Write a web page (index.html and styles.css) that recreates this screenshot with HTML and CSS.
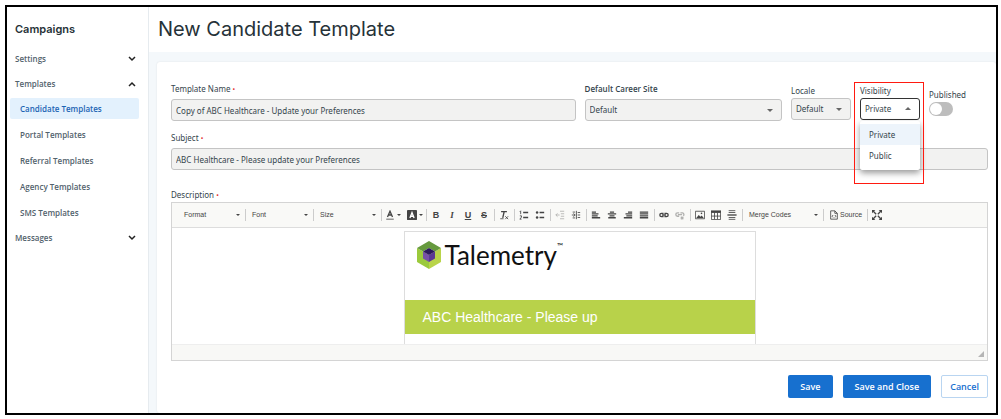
FILE: index.html
```html
<!DOCTYPE html>
<html lang="en">
<head>
    <meta charset="UTF-8">
    <meta name="viewport" content="width=device-width, initial-scale=1.0">
    <title>New Candidate Template</title>
    <link rel="stylesheet" href="styles.css">
</head>
<body>
    <div class="app">
        <nav class="sidebar">
            <h2>Campaigns</h2>
            <button class="nav-group" type="button">Settings
                <svg width="8" height="6" viewBox="0 0 8 6"><path d="M1 1l3 3 3-3"/></svg>
            </button>
            <button class="nav-group" type="button">Templates
                <svg width="8" height="6" viewBox="0 0 8 6"><path d="M1 5l3-3 3 3"/></svg>
            </button>
            <ul class="nav-list">
                <li><a href="#" class="active">Candidate Templates</a></li>
                <li><a href="#">Portal Templates</a></li>
                <li><a href="#">Referral Templates</a></li>
                <li><a href="#">Agency Templates</a></li>
                <li><a href="#">SMS Templates</a></li>
            </ul>
            <button class="nav-group" type="button">Messages
                <svg width="8" height="6" viewBox="0 0 8 6"><path d="M1 1l3 3 3-3"/></svg>
            </button>
        </nav>

        <main class="main">
            <header class="page-header">
                <h1>New Candidate Template</h1>
            </header>

            <form class="card">
                <div class="field-row">
                    <div class="field">
                        <label for="template-name">Template Name <span class="required">•</span></label>
                        <input type="text" id="template-name" name="template-name" value="Copy of ABC Healthcare - Update your Preferences">
                    </div>
                    <div class="field">
                        <label for="career-site" class="strong">Default Career Site</label>
                        <div class="select">
                            <select id="career-site" name="career-site"><option>Default</option></select>
                        </div>
                    </div>
                    <div class="field compact">
                        <label for="locale">Locale</label>
                        <div class="select">
                            <select id="locale" name="locale"><option>Default</option></select>
                        </div>
                    </div>
                    <div class="field compact visibility">
                        <label for="visibility">Visibility</label>
                        <div class="select open">
                            <select id="visibility" name="visibility"><option>Private</option><option>Public</option></select>
                        </div>
                        <ul class="menu" role="listbox" aria-label="Visibility">
                            <li role="option" class="selected" aria-selected="true">Private</li>
                            <li role="option" aria-selected="false">Public</li>
                        </ul>
                        <div class="highlight"></div>
                    </div>
                    <div class="field published">
                        <label for="published">Published</label>
                        <input type="checkbox" id="published" name="published" class="toggle">
                    </div>
                </div>

                <div class="field subject">
                    <label for="subject">Subject <span class="required">•</span></label>
                    <input type="text" id="subject" name="subject" value="ABC Healthcare - Please update your Preferences">
                </div>

                <div class="description">
                    <span class="label" id="description-label">Description <span class="required">•</span></span>
                    <div class="editor">
                        <div class="toolbar">
                            <button type="button" class="combo">Format</button>
                            <button type="button" class="combo">Font</button>
                            <button type="button" class="combo">Size</button>
                            <div class="group colors">
                                <button type="button" class="tool-drop" aria-label="Text color">
                                    <svg class="icon" viewBox="0 0 12 12"><path class="line" d="M3 8.500L6 1.500l3 7M4.200 6h3.600"/><path class="thin" d="M1.500 11h9"/></svg>
                                </button>
                                <button type="button" class="tool-drop" aria-label="Background color">
                                    <svg class="icon" viewBox="0 0 12 12"><rect x="0" y="0" width="12" height="12" rx="1"/><path class="line white" d="M3.500 9.500L6 3l2.500 6.500M4.500 7.500h3"/></svg>
                                </button>
                            </div>
                            <div class="group">
                                <button type="button" class="tool bold">B</button>
                                <button type="button" class="tool italic">I</button>
                                <button type="button" class="tool underline">U</button>
                                <button type="button" class="tool strike">S</button>
                            </div>
                            <div class="group">
                                <button type="button" class="tool" aria-label="Remove format">
                                    <svg class="icon" viewBox="0 0 12 12"><path class="line" d="M2.500 2h7M6.200 2L4.500 9.500"/><path class="thin" d="M1.500 10.500h4M7.500 7.500l3.500 3.500M11 7.500L7.500 11"/></svg>
                                </button>
                            </div>
                            <div class="group">
                                <button type="button" class="tool" aria-label="Numbered list">
                                    <svg class="icon" viewBox="0 0 12 12"><path class="thin" d="M2 1v4M1 2l1-1M1 7h2v1.500L1 11h2"/><path class="line" d="M5 3h6M5 9h6"/></svg>
                                </button>
                                <button type="button" class="tool" aria-label="Bulleted list">
                                    <svg class="icon" viewBox="0 0 12 12"><circle cx="2.500" cy="3" r="1.500"/><circle cx="2.500" cy="9" r="1.500"/><path class="line" d="M5.500 3H11M5.500 9H11"/></svg>
                                </button>
                            </div>
                            <div class="group">
                                <button type="button" class="tool" aria-label="Decrease indent" disabled>
                                    <svg class="icon" viewBox="0 0 12 12"><path class="thin" d="M6 1.500h5M7 4.500h4M7 7.500h4M6 10.500h5M5.500 6H1M3 4L1 6l2 2"/></svg>
                                </button>
                                <button type="button" class="tool" aria-label="Increase indent">
                                    <svg class="icon" viewBox="0 0 12 12"><path class="thin" d="M6.500 1v10M8 3h3M8 6h3M8 9h3M1 6h4M3 4l2 2-2 2M2 2.500h3M2 9.500h3"/></svg>
                                </button>
                            </div>
                            <div class="group">
                                <button type="button" class="tool" aria-label="Align left">
                                    <svg class="icon" viewBox="0 0 12 12"><path class="line" d="M1 2.500h5M1 4.700h8M1 7h7M1 9.300h10"/></svg>
                                </button>
                                <button type="button" class="tool" aria-label="Center">
                                    <svg class="icon" viewBox="0 0 12 12"><path class="line" d="M3.500 2.500h5M1 4.700h10M3 7h6M1.500 9.300h9"/></svg>
                                </button>
                                <button type="button" class="tool" aria-label="Align right">
                                    <svg class="icon" viewBox="0 0 12 12"><path class="line" d="M6 2.500h5M3 4.700h8M4 7h7M1 9.300h10"/></svg>
                                </button>
                                <button type="button" class="tool" aria-label="Justify">
                                    <svg class="icon" viewBox="0 0 12 12"><path class="line" d="M1 2.500h10M1 4.700h10M1 7h10M1 9.300h10"/></svg>
                                </button>
                            </div>
                            <div class="group">
                                <button type="button" class="tool" aria-label="Link">
                                    <svg class="icon" viewBox="0 0 12 12"><path class="line" d="M5.500 4H3a2 2 0 0 0 0 4h2.500M6.500 4H9a2 2 0 0 1 0 4H6.500M3.500 6h5"/></svg>
                                </button>
                                <button type="button" class="tool" aria-label="Unlink" disabled>
                                    <svg class="icon" viewBox="0 0 12 12"><path class="line" d="M5 3.500H3a2 2 0 0 0 0 4h2M6.500 3.500H9a2 2 0 0 1 1 3.500M3.500 5.500h5M7 8l3 3M10 8l-3 3"/></svg>
                                </button>
                            </div>
                            <div class="group">
                                <button type="button" class="tool" aria-label="Image">
                                    <svg class="icon" viewBox="0 0 12 12"><path class="thin" d="M.5 1.500h11v9H.5z"/><path d="M1.500 9.500l3-3.500 2 2L8 6.500l2.500 3z"/><circle cx="7.800" cy="4" r="1"/></svg>
                                </button>
                                <button type="button" class="tool" aria-label="Table">
                                    <svg class="icon" viewBox="0 0 12 12"><path d="M0 .5h12v3H0z"/><path class="thin" d="M.5 3v8.500h11V3M.5 7.300h11M4.200 3v8M7.800 3v8"/></svg>
                                </button>
                                <button type="button" class="tool" aria-label="Horizontal line">
                                    <svg class="icon" viewBox="0 0 12 12"><path class="thin" d="M2 .8h8M2 3h8M2 9h8M2 11.200h8"/><path class="line" d="M.5 6h11"/></svg>
                                </button>
                            </div>
                            <button type="button" class="combo wide">Merge Codes</button>
                            <div class="group">
                                <button type="button" class="source">
                                    <svg class="icon" viewBox="0 0 12 12"><path class="thin" d="M2 1h5l3 3v7H2zM7 1v3h3M5 6L3.700 7.500 5 9M7 6l1.300 1.500L7 9"/></svg>
                                    Source
                                </button>
                            </div>
                            <button type="button" class="tool maximize" aria-label="Maximize">
                                <svg class="icon" viewBox="0 0 12 12"><path d="M0 0h4L0 4zM12 0v4L8 0zM0 12V8l4 4zM12 12H8l4-4z"/><path class="line" d="M1 1l4 4M11 1L7 5M1 11l4-4M11 11L7 7"/></svg>
                            </button>
                        </div>
                        <div class="editor-body" contenteditable="true" role="textbox" aria-labelledby="description-label" spellcheck="false">
                            <div class="email">
                                <div class="logo">
                                    <svg width="24" height="28" viewBox="0 0 24 28">
                                        <path fill="#9bca3c" d="M0 7l12 7v14L0 21z"/>
                                        <path fill="#b9d44a" d="M24 7l-12 7v14l12-7z"/>
                                        <path fill="#66993e" d="M12 0l12 7-6 3.500-6-3.500-6 3.500L0 7z"/>
                                        <path fill="#7650a8" d="M6 10.500l6 3.500v7l-6-3.500z"/>
                                        <path fill="#5b3996" d="M18 10.500L12 14v7l6-3.500z"/>
                                        <path fill="#2c195e" d="M12 7l6 3.500-6 3.500-6-3.500z"/>
                                    </svg>
                                    <span class="brand">Talemetry</span><span class="tm">™</span>
                                </div>
                                <div class="banner">ABC Healthcare - Please up</div>
                            </div>
                        </div>
                        <div class="editor-foot">
                            <svg width="6" height="6" viewBox="0 0 6 6"><path d="M6 0v6H0z"/></svg>
                        </div>
                    </div>
                </div>

                <div class="actions">
                    <button type="submit" class="btn">Save</button>
                    <button type="button" class="btn">Save and Close</button>
                    <button type="button" class="btn outline">Cancel</button>
                </div>
            </form>
        </main>
    </div>
</body>
</html>
```
FILE: styles.css
```css
* {
    box-sizing: border-box;
}
body {
    margin: 0;
    background-color: #fff;
    color: #34444c;
    font-family: "Noto Sans", "Open Sans", sans-serif;
    font-size: 8px;
    line-height: 12px;
}
button, input, select {
    font: inherit;
    color: inherit;
    margin: 0;
}
button {
    padding: 0;
    border: none;
    background: none;
    cursor: pointer;
}
ul {
    list-style: none;
    margin: 0;
    padding: 0;
}
.app {
    display: flex;
    margin: 5px 3px 4px 5px;
    border: 2px solid #000;
}

/* sidebar */
.sidebar {
    flex: none;
    width: 142px;
    padding: 14px 9px 0 3px;
    border-right: 1px solid #e6ebef;
    font-family: "Open Sans", sans-serif;
    font-weight: 600;
    color: #52626c;
}
.sidebar h2 {
    margin: 0 0 9px 5px;
    font-family: Inter, sans-serif;
    font-size: 11px;
    line-height: 16px;
    font-weight: 600;
    color: #263238;
}
.nav-group {
    display: flex;
    justify-content: space-between;
    align-items: center;
    width: 100%;
    height: 25px;
    padding: 0 3px 0 5px;
}
.nav-group svg {
    fill: none;
    stroke: #222;
    stroke-width: 1.5;
}
.nav-list {
    display: grid;
    gap: 5px;
    padding: 2px 0;
}
.nav-list a {
    display: block;
    padding: 0 10px;
    border-radius: 2px;
    line-height: 21px;
    color: inherit;
    text-decoration: none;
}
.nav-list a.active {
    background-color: #e3f1fd;
    color: #1c64b4;
}

/* main */
.main {
    flex: 1;
    min-width: 0;
    padding-left: 8px;
    background-color: #f4f8fb;
}
.page-header {
    margin: 0 0 10px -8px;
    padding: 8px 9px 9px;
    background-color: #fff;
}
.page-header h1 {
    margin: 0;
    font-family: Inter, sans-serif;
    font-size: 20px;
    line-height: 28px;
    font-weight: 400;
    color: #263238;
}
.card {
    padding: 21px 8px 15px 14px;
    background-color: #fff;
    border-radius: 3px;
    box-shadow: 0 0 2px rgba(0, 0, 0, 0.1);
}
.field-row {
    display: grid;
    grid-template-columns: 41fr 20fr 60px 60px 59px;
    gap: 9px;
}
.field {
    display: flex;
    flex-direction: column;
    align-items: stretch;
    gap: 4px;
}
.field.compact {
    padding-top: 2px;
    gap: 1px;
}
.field .strong {
    font-family: "Open Sans", sans-serif;
    font-weight: 600;
}
.required {
    color: #e53935;
    font-size: 7px;
    line-height: 1;
}
.field input[type="text"],
.select select {
    width: 100%;
    height: 22px;
    padding: 0 4px;
    border: 1px solid #c4c4c4;
    border-radius: 3px;
    background-color: #f2f2f1;
}
.select {
    position: relative;
}
.select select {
    display: block;
    appearance: none;
}
.select::after {
    content: "";
    position: absolute;
    top: 10px;
    right: 9px;
    border: 3px solid transparent;
    border-top-color: #666;
    border-bottom: none;
    pointer-events: none;
}
.select.open select {
    border-color: #333;
    background-color: #fff;
}
.select.open::after {
    top: 9px;
    border-top: none;
    border-bottom: 3px solid #666;
}
.visibility {
    position: relative;
}
.menu {
    position: absolute;
    z-index: 1;
    top: 38px;
    left: 0;
    right: 0;
    padding: 3px 0 4px;
    background-color: #fff;
    border-radius: 2px;
    box-shadow: 0 3px 6px rgba(0, 0, 0, 0.4);
}
.menu li {
    padding: 0 9px;
    line-height: 21px;
}
.menu .selected {
    background-color: #edf4fb;
}
.highlight {
    position: absolute;
    z-index: 2;
    top: -1px;
    left: -6px;
    right: -4px;
    height: 102px;
    border: 1px solid #ff1a10;
    pointer-events: none;
}
.published {
    padding-top: 6px;
    gap: 1px;
}
.toggle {
    appearance: none;
    width: 24px;
    height: 14px;
    padding: 1px;
    border-radius: 7px;
    background-color: #bdbdbd;
}
.toggle::before {
    content: "";
    display: block;
    width: 12px;
    height: 12px;
    border-radius: 50%;
    background-color: #fff;
}
.toggle:checked::before {
    margin-left: 10px;
}
.subject {
    margin: 11px 0 19px;
}

/* editor */
.description .label {
    display: block;
    margin-bottom: 1px;
}
.editor {
    border: 1px solid #d4d4d4;
}
.toolbar {
    display: flex;
    height: 25px;
    padding: 0 6px;
    align-items: center;
    overflow: hidden;
    background-color: #f9f9f7;
    border-bottom: 1px solid #ddd;
    font-family: "Liberation Sans", Arial, sans-serif;
    font-size: 7px;
    color: #444;
}
.combo, .group {
    display: flex;
    flex: none;
    align-items: center;
    height: 12px;
    border-right: 1px solid #ccc;
}
.combo {
    justify-content: space-between;
    width: 68px;
    padding: 0 5px 0 6px;
}
.combo.wide {
    width: 81px;
}
.combo::after,
.tool-drop::after {
    content: "";
    border: 2px solid transparent;
    border-top-color: #444;
    border-bottom: none;
}
.group {
    padding: 0 2px 0 1px;
}
.group.colors {
    padding: 0;
}
.tool, .tool-drop {
    display: flex;
    flex: none;
    align-items: center;
    justify-content: center;
    width: 16px;
    height: 16px;
}
.tool-drop {
    gap: 2px;
    width: 22px;
}
.tool:disabled {
    opacity: 0.4;
}
.icon {
    width: 10px;
    height: 10px;
    fill: #444;
}
.icon .line,
.icon .thin {
    fill: none;
    stroke: #444;
    stroke-width: 1.6;
}
.icon .thin {
    stroke-width: 1;
}
.icon .white {
    stroke: #fff;
}
.bold, .italic, .underline, .strike {
    font-size: 9px;
    font-weight: 700;
}
.italic {
    font-family: "Liberation Serif", serif;
    font-style: italic;
}
.underline {
    text-decoration: underline;
}
.strike {
    text-decoration: line-through;
}
.source {
    display: flex;
    align-items: center;
    gap: 1px;
    padding: 0 3px 0 4px;
}
.maximize {
    margin-left: 1px;
}
.editor-body {
    height: 116px;
    padding: 3px 8px 0;
    overflow: hidden;
}
.email {
    width: 352px;
    height: 200px;
    margin: 0 auto;
    border: 1px solid #ddd;
}
.logo {
    display: flex;
    align-items: center;
    height: 68px;
    padding: 0 12px 22px;
    color: #111;
    font-family: Lato, sans-serif;
}
.brand {
    margin-left: 4px;
    font-size: 26px;
    line-height: 28px;
}
.tm {
    align-self: flex-start;
    margin-top: 8px;
    font-size: 8px;
}
.banner {
    padding: 0 18px;
    background-color: #b8d24a;
    color: #fff;
    font-family: "Liberation Sans", Arial, sans-serif;
    font-size: 14px;
    line-height: 34px;
}
.editor-foot {
    display: flex;
    justify-content: flex-end;
    align-items: flex-end;
    height: 16px;
    padding: 3px;
    background-color: #f8f8f6;
    border-top: 1px solid #eee;
}
.editor-foot svg {
    fill: #b5b5b5;
}
.actions {
    display: flex;
    justify-content: flex-end;
    gap: 10px;
    margin-top: 14px;
}
.btn {
    height: 23px;
    padding: 0 12px;
    border-radius: 2px;
    background-color: #1770cf;
    color: #fff;
    font-family: "Open Sans", sans-serif;
    font-size: 9px;
    font-weight: 600;
}
.btn.outline {
    padding: 0 8px;
    border: 1px solid #b9d5f1;
    background-color: #fff;
    color: #1770cf;
}
```
